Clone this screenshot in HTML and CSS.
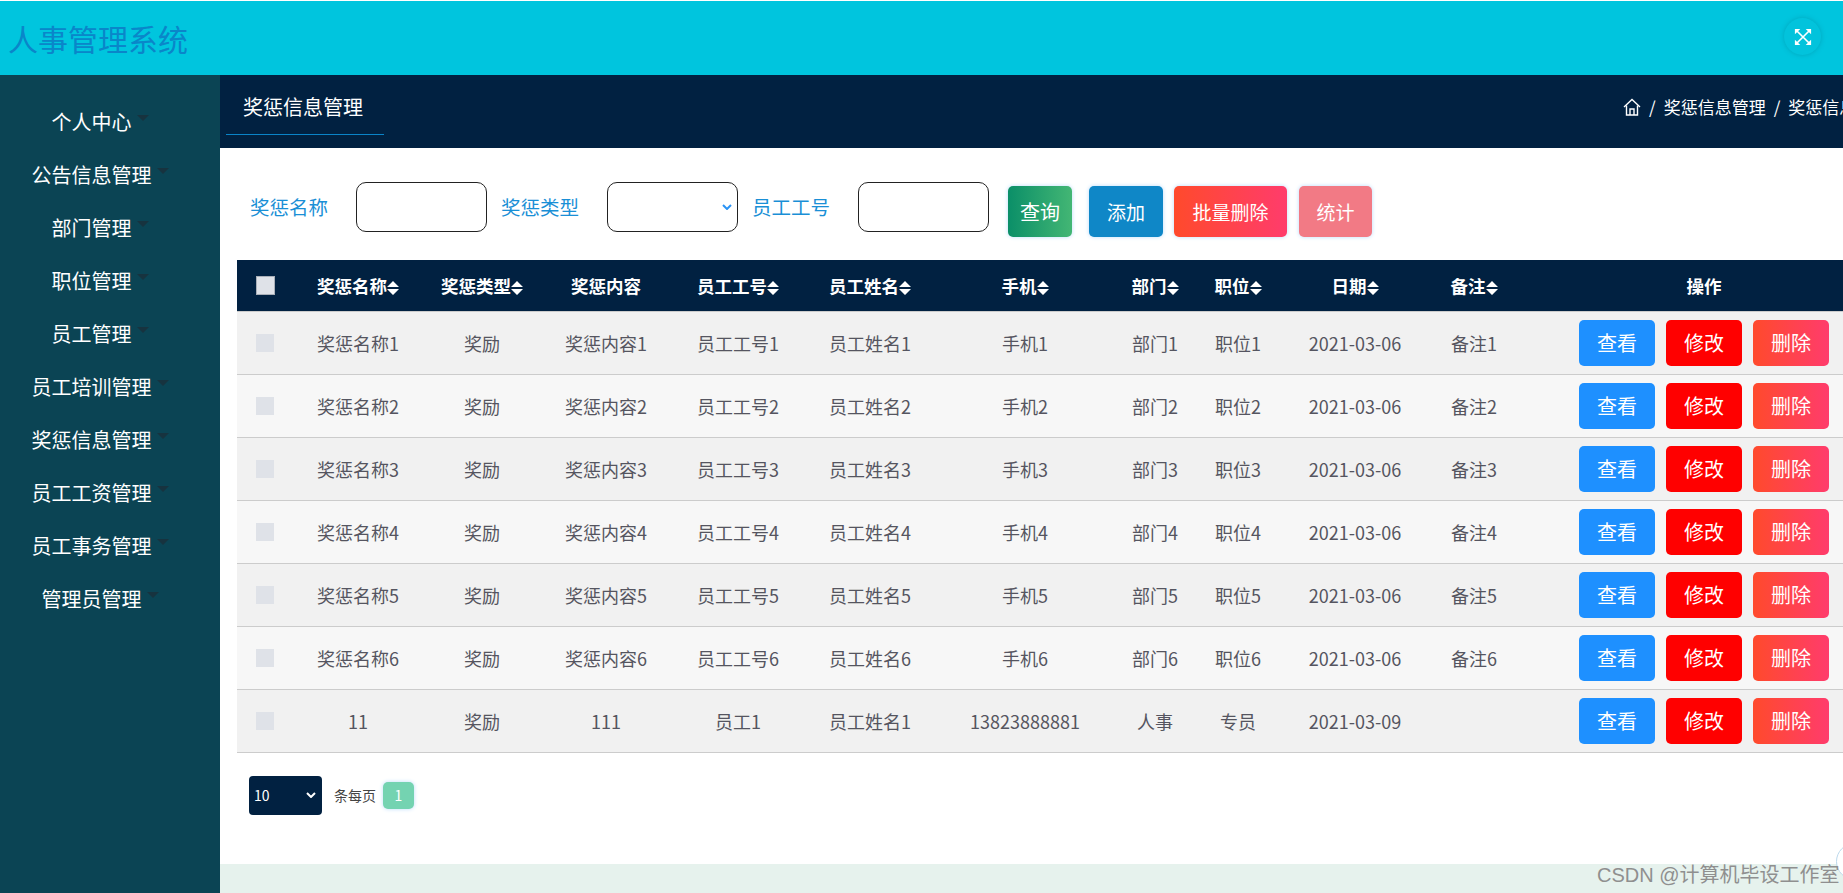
FILE: index.html
```html
<!DOCTYPE html>
<html lang="zh-CN">
<head>
<meta charset="utf-8">
<title>人事管理系统</title>
<link rel="stylesheet" href="styles.css">
</head>
<body>
<header class="topbar">
  <h1 class="brand">人事管理系统</h1>
  <button class="expand" aria-label="全屏">
    <svg viewBox="0 0 20 20" width="18" height="18" fill="none" stroke="#fff" stroke-width="1.8"><path d="M3 3l14 14M17 3L3 17"/><path d="M1 1h6L1 7zM19 1h-6l6 6zM1 19h6l-6-6zM19 19h-6l6-6z" fill="#fff" stroke="none"/></svg>
  </button>
</header>
<div class="shell">
  <nav class="sidebar">
    <a class="menu-item">个人中心<i class="caret"></i></a>
    <a class="menu-item">公告信息管理<i class="caret"></i></a>
    <a class="menu-item">部门管理<i class="caret"></i></a>
    <a class="menu-item">职位管理<i class="caret"></i></a>
    <a class="menu-item">员工管理<i class="caret"></i></a>
    <a class="menu-item">员工培训管理<i class="caret"></i></a>
    <a class="menu-item">奖惩信息管理<i class="caret"></i></a>
    <a class="menu-item">员工工资管理<i class="caret"></i></a>
    <a class="menu-item">员工事务管理<i class="caret"></i></a>
    <a class="menu-item">管理员管理<i class="caret"></i></a>
  </nav>
  <main class="main">
    <div class="subbar">
      <div class="tab">奖惩信息管理</div>
      <div class="crumbs">
        <svg class="home" viewBox="0 0 18 18" width="18" height="18" fill="none" stroke="#fff" stroke-width="1.4"><path d="M1 9l8-7.5L17 9"/><path d="M3.5 7.5V17h11V7.5"/><path d="M7 17v-6h4v6"/></svg>
        <span>/</span><span>奖惩信息管理</span><span>/</span><span>奖惩信息管理</span>
      </div>
    </div>
    <section class="panel">
      <form class="filters">
        <label class="f-label">奖惩名称</label><input class="f-input">
        <label class="f-label">奖惩类型</label>
        <div class="f-select"><svg viewBox="0 0 10 6" width="10" height="6" fill="none" stroke="#2a93f5" stroke-width="2"><path d="M1 1l4 4 4-4"/></svg></div>
        <label class="f-label">员工工号</label><input class="f-input">
        <button type="button" class="btn b-search">查询</button>
        <button type="button" class="btn b-add">添加</button>
        <button type="button" class="btn b-batch">批量删除</button>
        <button type="button" class="btn b-stat">统计</button>
      </form>
      <div class="table-wrap">
        <table class="grid">
          <colgroup>
            <col class="c0"><col class="c1"><col class="c2"><col class="c3"><col class="c4"><col class="c5"><col class="c6"><col class="c7"><col class="c8"><col class="c9"><col class="c10"><col class="c11">
          </colgroup>
          <thead id="head"></thead>
          <tbody id="body"></tbody>
        </table>
      </div>
      <div class="pager">
        <div class="size">10<svg viewBox="0 0 10 6" width="10" height="6" fill="none" stroke="#fff" stroke-width="2"><path d="M1 1l4 4 4-4"/></svg></div>
        <span class="per">条每页</span>
        <span class="page">1</span>
      </div>
    </section>
    <footer class="foot"></footer>
  </main>
</div>
<div class="float-ball"></div>
<div class="watermark">CSDN @计算机毕设工作室</div>
<script src="app.js"></script>
</body>
</html>
```
FILE: styles.css
```css
* { box-sizing: border-box; }
html, body { margin: 0; height: 100%; overflow: hidden; }
body { font-family: "Noto Sans CJK SC", "Noto Sans", sans-serif; background: #fff; display: flex; flex-direction: column; padding-top: 1px; }
.topbar { height: 74px; flex: none; background: #00c5de; display: flex; align-items: center; justify-content: space-between; padding: 0 22px 0 8px; }
.brand { margin: 0; font-size: 30px; font-weight: 400; color: #0a86c9; line-height: 1; }
.expand { width: 37px; height: 37px; border: 0; padding: 0; border-radius: 50%; background: #02c3dc; box-shadow: 0 0 5px rgba(0,110,130,.35); display: flex; align-items: center; justify-content: center; margin-top: -3px; }
.shell { flex: 1; display: flex; min-height: 0; }
.sidebar { width: 220px; flex: none; background: #0b4454; padding: 20px 20px 0 0; display: flex; flex-direction: column; }
.menu-item { height: 53px; display: flex; align-items: center; justify-content: center; color: #fff; font-size: 20px; }
.caret { width: 0; height: 0; border: 6px solid transparent; border-top: 6px solid #17333f; border-bottom: 0; margin: -8px 0 0 5px; }
.main { flex: 1; min-width: 0; display: flex; flex-direction: column; box-shadow: inset 6px 0 6px -4px #e3effa; }
.subbar { height: 73px; flex: none; background: #012141; display: flex; align-items: flex-start; overflow: hidden; color: #fff; }
.tab { width: 158px; margin: 0 0 0 6px; height: 60px; padding: 17px 0 0 17px; font-size: 20px; line-height: 30px; border-bottom: 1px solid #0a84c8; flex: none; }
.crumbs { display: flex; align-items: center; flex: none; gap: 8px; font-size: 17px; margin-left: 1239px; height: 63px; white-space: nowrap; }
.home { margin-right: 0; }
.panel { flex: 1; min-height: 0; background: #fff; padding: 34px 0 0 17px; }
.filters { display: flex; align-items: flex-start; height: 78px; margin-left: 13px; }
.f-label { width: 80px; height: 50px; line-height: 50px; font-size: 19.5px; color: #1a8fd6; margin-right: 26px; flex: none; }
.f-input, .f-select { width: 131px; height: 50px; flex: none; border: 1px solid #222; border-radius: 10px; background: #fff; margin-right: 14px; padding: 0; }
.f-select { display: flex; align-items: center; justify-content: flex-end; padding-right: 5px; }
.btn { height: 51px; margin-top: 4px; border: 0; padding: 0; border-radius: 5px; color: #fff; font: inherit; font-size: 19px; box-shadow: 0 0 4px #bcdcfb; flex: none; }
.b-search { width: 64px; margin-left: 5px; margin-right: 17px; font-size: 20px; background: linear-gradient(90deg, #0b8f68, #43b674); }
.b-add { width: 74px; margin-right: 11px; background: #0f87c7; }
.b-batch { width: 113px; margin-right: 12px; background: linear-gradient(90deg, #ff4a2c, #ff3c6c); }
.b-stat { width: 73px; background: #f27a85; }
.table-wrap { overflow: hidden; }
.grid { border-collapse: collapse; table-layout: fixed; width: 1652px; }
.c0 { width: 56px; } .c1 { width: 130px; } .c2 { width: 118px; } .c3 { width: 130px; } .c4 { width: 134px; } .c5 { width: 130px; }
.c6 { width: 180px; } .c7 { width: 80px; } .c8 { width: 86px; } .c9 { width: 148px; } .c10 { width: 90px; } .c11 { width: 370px; }
.grid th { height: 51px; background: #012141; color: #fff; font-size: 17.5px; font-weight: 700; text-align: center; border-bottom: 1px solid #ccc; padding: 0; white-space: nowrap; }
.grid td { height: 63px; font-size: 18px; color: #555560; text-align: center; border-bottom: 1px solid #ccc; padding: 0; white-space: nowrap; }
.grid tr:nth-child(odd) td { background: #f1f1f1; }
.grid tr:nth-child(even) td { background: #f7f7f7; }
.sort { display: inline-block; width: 12px; height: 14px; margin-left: 0; vertical-align: -2px; }
.check { display: block; width: 18px; height: 18px; margin: 0 0 0 19px; background: #dfe2e8; }
th .check { width: 19px; height: 19px; border: 1px solid #a9afb8; }
.ops { display: flex; justify-content: center; gap: 11px; align-items: center; }
.op { width: 76px; height: 46px; border: 0; padding: 0; border-radius: 5px; color: #fff; font: inherit; font-size: 20px; }
.op-view { background: #1e90ff; }
.op-edit { background: #ff0000; }
.op-del { background: linear-gradient(90deg, #ff4a2c, #ff3c6c); }
.pager { display: flex; align-items: center; margin: 23px 0 0 12px; height: 39px; }
.size { width: 73px; height: 39px; border-radius: 4px; background: #012141; color: #fff; font-size: 14px; display: flex; align-items: center; justify-content: space-between; padding: 0 6px 0 5px; }
.per { font-size: 14px; color: #444; margin: 0 7px 0 12px; }
.page { width: 31px; height: 27px; border-radius: 5px; background: #74d3b1; color: #fff; font-size: 14px; display: flex; align-items: center; justify-content: center; box-shadow: 0 0 4px #bcdcfb; }
.foot { height: 29px; flex: none; background: #e6f2ed; }
.float-ball { position: absolute; left: 1836px; top: 843px; width: 37px; height: 37px; border-radius: 50%; background: #fff; border: 1px solid #bcd9ec; }
.watermark { position: absolute; left: 1597px; top: 859px; font-family: "Liberation Sans", "Noto Sans CJK SC", sans-serif; font-size: 20px; line-height: 32px; color: #8f8f8f; white-space: nowrap; }
```
FILE: app.js
```js
var cols = [['奖惩名称',1],['奖惩类型',1],['奖惩内容',0],['员工工号',1],['员工姓名',1],['手机',1],['部门',1],['职位',1],['日期',1],['备注',1],['操作',0]];
var sort = '<svg class="sort" viewBox="0 0 12 14"><path d="M6 0l6 6H0zM6 14L0 8h12z" fill="#fff"/></svg>';
var h = '<tr><th><span class="check"></span></th>';
cols.forEach(function (c) { h += '<th>' + c[0] + (c[1] ? sort : '') + '</th>'; });
document.getElementById('head').innerHTML = h + '</tr>';
var rows = [];
for (var i = 1; i <= 6; i++) {
  rows.push(['奖惩名称' + i, '奖励', '奖惩内容' + i, '员工工号' + i, '员工姓名' + i, '手机' + i, '部门' + i, '职位' + i, '2021-03-06', '备注' + i]);
}
rows.push(['11', '奖励', '111', '员工1', '员工姓名1', '13823888881', '人事', '专员', '2021-03-09', '']);
var b = '';
rows.forEach(function (r) {
  b += '<tr><td><span class="check"></span></td>';
  r.forEach(function (v) { b += '<td>' + v + '</td>'; });
  b += '<td><div class="ops"><button class="op op-view">查看</button><button class="op op-edit">修改</button><button class="op op-del">删除</button></div></td></tr>';
});
document.getElementById('body').innerHTML = b;
```
